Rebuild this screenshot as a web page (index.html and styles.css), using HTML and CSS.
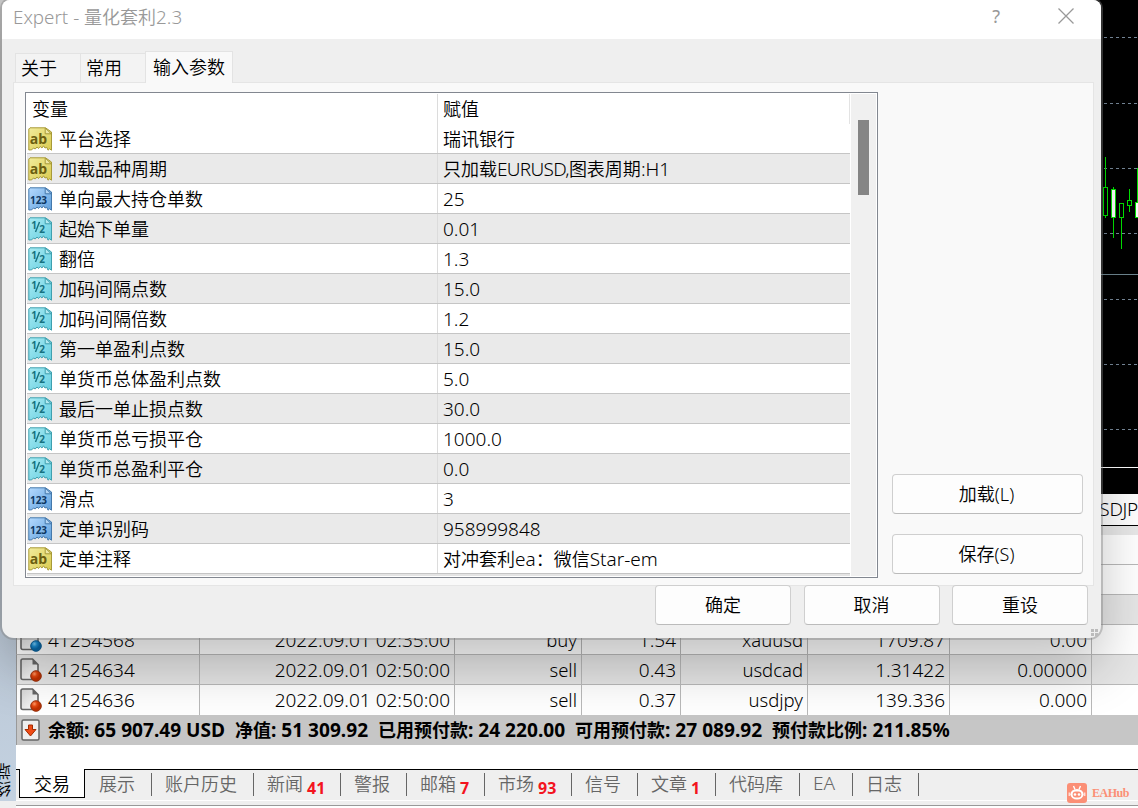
FILE: index.html
```
<!DOCTYPE html>
<html lang="zh-CN">
<head>
    <meta charset="UTF-8">
    <meta name="viewport" content="width=device-width, initial-scale=1.0">
    <title>Expert - 量化套利2.3</title>
    <link rel="stylesheet" href="styles.css">
</head>
<body>
    <!-- shared icon shapes -->
    <svg class="defs" width="0" height="0">
        <defs>
            <linearGradient id="gYellow" x2="1" y2="1"><stop offset="0" stop-color="#f3ec9c"/><stop offset="1" stop-color="#d9cb50"/></linearGradient>
            <linearGradient id="gBlue" x2="1" y2="1"><stop offset="0" stop-color="#b5daff"/><stop offset="1" stop-color="#5f9fdb"/></linearGradient>
            <linearGradient id="gCyan" x2="1" y2="1"><stop offset="0" stop-color="#a9ebf3"/><stop offset="1" stop-color="#66cee0"/></linearGradient>
            <linearGradient id="gDoc" x2="1" y2="1"><stop offset="0" stop-color="#d4d4d4"/><stop offset="1" stop-color="#fff"/></linearGradient>
            <radialGradient id="gRed" cx=".35" cy=".3"><stop offset="0" stop-color="#ff9a66"/><stop offset=".5" stop-color="#e2470f"/><stop offset="1" stop-color="#bd3000"/></radialGradient>
            <radialGradient id="gDot" cx=".35" cy=".3"><stop offset="0" stop-color="#7fd0fa"/><stop offset=".5" stop-color="#1c8fd6"/><stop offset="1" stop-color="#0968a8"/></radialGradient>
            <path id="paper" d="M2 .8H17.5L23.5 5V23.2L21.5 21.8 20 23.2 18.8 20.3 17 21 15.5 18.8 14 21 12.2 19.5 10.5 21.5 9 20 7.2 22 5.5 21 3.8 22.8 .8 23V2Z"/>
            <path id="fold" d="M17.2 1V6.8H23.2Z"/>
            <path id="doc" d="M2.8 1H12.5L18 6.5V19.5Q18 21.5 16 21.5H2.8Q1 21.5 1 19.5V2.8Q1 1 2.8 1Z"/>
        </defs>
    </svg>

    <div class="workspace">
        <div class="rail"><span>终端</span></div>
        <div class="main">
            <div class="chart">
                <svg width="37" height="494" shape-rendering="crispEdges">
                    <g stroke="#778899" stroke-dasharray="3 3">
                        <path d="M3 37.5H37M3 103.5H37M3 168.5H37M3 233.5H37M3 299.5H37M3 364.5H37M3 429.5H37"/>
                    </g>
                    <path d="M0 274.5H37" stroke="#6f8791"/>
                    <path d="M0 467.5H37" stroke="#fff"/>
                    <g stroke="#00e600" fill="#000">
                        <path d="M4.5 157V218M12.5 187V238M20.5 203V249M28.5 189V212M36.5 168V218"/>
                        <rect x="2.5" y="187.5" width="4" height="28"/>
                        <rect x="10.5" y="189.5" width="4" height="28" fill="#fff"/>
                        <rect x="18.5" y="203.5" width="4" height="14"/>
                        <rect x="26.5" y="200.5" width="4" height="5"/>
                        <rect x="34.5" y="202.5" width="4" height="15" fill="#fff"/>
                    </g>
                </svg>
            </div>
            <div class="chart-tab"><span>SDJP</span></div>
            <div class="terminal">
                <div class="order blank"></div>
                <div class="order blank"></div>
                <div class="order odd blank"></div>
                <div class="order">
                    <span class="id"><svg width="23" height="24"><use href="#doc" fill="url(#gDoc)" stroke="#666" stroke-width="1.6"/><path d="M12.5 1V6.5H18Z" fill="#666"/><circle cx="16" cy="18" r="5.3" fill="url(#gDot)" stroke="#0e5f96"/></svg>41254568</span>
                    <span>2022.09.01 02:35:00</span><span>buy</span><span>1.54</span><span>xauusd</span><span>1709.87</span><span>0.00</span>
                </div>
                <div class="order odd">
                    <span class="id"><svg width="23" height="24"><use href="#doc" fill="url(#gDoc)" stroke="#666" stroke-width="1.6"/><path d="M12.5 1V6.5H18Z" fill="#666"/><circle cx="16" cy="18" r="5.3" fill="url(#gRed)" stroke="#99340f"/></svg>41254634</span>
                    <span>2022.09.01 02:50:00</span><span>sell</span><span>0.43</span><span>usdcad</span><span>1.31422</span><span>0.00000</span>
                </div>
                <div class="order last">
                    <span class="id"><svg width="23" height="24"><use href="#doc" fill="url(#gDoc)" stroke="#666" stroke-width="1.6"/><path d="M12.5 1V6.5H18Z" fill="#666"/><circle cx="16" cy="18" r="5.3" fill="url(#gRed)" stroke="#99340f"/></svg>41254636</span>
                    <span>2022.09.01 02:50:00</span><span>sell</span><span>0.37</span><span>usdjpy</span><span>139.336</span><span>0.000</span>
                </div>
                <div class="summary">
                    <svg width="19" height="22"><rect x="1" y="1" width="17" height="20" rx="1.5" fill="#eee" stroke="#666" stroke-width="1.5"/><path d="M7.5 6H11.5V10.5H15L9.5 17 4 10.5H7.5Z" fill="#ef4b16" stroke="#a22b00"/></svg>
                    <span>余额<i>: 65 907.49 USD&nbsp; </i>净值<i>: 51 309.92&nbsp; </i>已用预付款<i>: 24 220.00&nbsp; </i>可用预付款<i>: 27 089.92&nbsp; </i>预付款比例<i>: 211.85%</i></span>
                </div>
                <div class="tabs">
                    <span class="tab active">交易</span>
                    <span class="tab">展示</span>
                    <span class="tab">账户历史</span>
                    <span class="tab">新闻<b>41</b></span>
                    <span class="tab">警报</span>
                    <span class="tab">邮箱<b>7</b></span>
                    <span class="tab">市场<b>93</b></span>
                    <span class="tab">信号</span>
                    <span class="tab">文章<b>1</b></span>
                    <span class="tab">代码库</span>
                    <span class="tab latin">EA</span>
                    <span class="tab">日志</span>
                </div>
                <div class="frame-edge"></div>
            </div>
        </div>
    </div>

    <div class="dialog">
        <div class="titlebar">
            <span class="title"><i>Expert - </i>量化套利<i>2.3</i></span>
            <span class="help">?</span>
            <svg width="16" height="16"><path d="M.5 .5L15.5 15.5M15.5 .5L.5 15.5" stroke="#999" stroke-width="1.3"/></svg>
        </div>
        <div class="dialog-tabs">
            <span>关于</span>
            <span>常用</span>
            <span class="current">输入参数</span>
        </div>
        <div class="page">
            <div class="list">
                <div class="rows" id="rows">
                    <div class="row head"><span>变量</span><span>赋值</span></div>
                </div>
                <div class="scroll"><div class="thumb"></div></div>
            </div>
            <div class="side">
                <button>加载<i>(L)</i></button>
                <button>保存<i>(S)</i></button>
            </div>
        </div>
        <div class="actions">
            <button>确定</button>
            <button>取消</button>
            <button>重设</button>
        </div>
        <svg class="grip" width="7" height="7"><path d="M0 0h3v3H0zM4 0h3v3H4zM0 4h3v3H0zM4 4h3v3H4z" fill="#bbb"/></svg>
    </div>

    <div class="watermark">
        <svg width="20" height="20"><rect width="20" height="20" rx="3" fill="#fb8f76"/><path d="M6.5 3L8 6.5M13.5 3L12 6.5" stroke="#fff" stroke-width="1.4"/><ellipse cx="10" cy="11.3" rx="6.6" ry="5.3" fill="#fff"/><rect x="5.6" y="8.6" width="8.8" height="5.8" rx="2.9" fill="#fb8f76"/><circle cx="8" cy="11.5" r="1.3" fill="#fff"/><circle cx="12" cy="11.5" r="1.3" fill="#fff"/><path d="M2.2 9.5V13M17.8 9.5V13" stroke="#fff"/></svg>
        <span>EAHub</span>
    </div>

    <script src="script.js"></script>
</body>
</html>
```
FILE: styles.css
```
* {
    box-sizing: border-box;
}
body {
    margin: 0;
    width: 1138px;
    height: 808px;
    overflow: hidden;
    position: relative;
    background: #efefef;
    color: #000;
    font: 350 18px/29px "Noto Sans CJK SC", sans-serif;
}
i {
    font-style: normal;
    font-family: "Noto Sans", sans-serif;
    font-weight: 350;
    font-size: 19px;
    line-height: 1;
}
.defs {
    position: absolute;
}
.workspace {
    display: flex;
    height: 808px;
}
.rail {
    width: 16px;
    height: 801px;
    flex: none;
    overflow: hidden;
    display: flex;
    flex-direction: column;
    justify-content: flex-end;
    background: linear-gradient(#c8c8c8 0 470px, #b9c5d3 560px, #c3d1e0);
}
.rail span {
    writing-mode: vertical-rl;
    transform: rotate(180deg);
    font-size: 17px;
    line-height: 17px;
    width: 17px;
    margin: 0 0 4px -6px;
}
.main {
    flex: 1;
    min-width: 0;
    display: flex;
    flex-direction: column;
}
.chart {
    height: 494px;
    display: flex;
    justify-content: flex-end;
    background: #000;
}
.chart svg {
    display: block;
}
.chart-tab {
    height: 32px;
    background: #fff;
    border-bottom: 1px solid #000;
    text-align: right;
    font-family: "Noto Sans", sans-serif;
    font-weight: 350;
    font-size: 19px;
    line-height: 31px;
}
.chart-tab span {
    letter-spacing: -.3px;
}
.terminal {
    height: 282px;
    border-top: 9px solid #e8e8e8;
    background: #fff;
    font-family: "Noto Sans", "Noto Sans CJK SC", sans-serif;
    flex: none;
}
.order {
    display: grid;
    grid-template-columns: 183px 255px 127px 99px 127px 142px 142px 1fr;
    height: 30px;
    font-size: 19px;
    font-weight: 350;
    border-left: 1px solid #999;
    border-bottom: 1px solid #b9b9b9;
}
.order.odd {
    background: #e6e6e6;
}
.order.last {
    border-bottom: none;
}
.order span {
    border-right: 1px solid #b9b9b9;
    padding-right: 4px;
    text-align: right;
    overflow: hidden;
    line-height: 30px;
}
.order span:nth-child(3),
.order span:nth-child(5) {
    font-size: 18.5px;
}
.order .id {
    display: flex;
    align-items: center;
    gap: 5px;
    padding-left: 3px;
}
.summary {
    height: 30px;
    background: #c6c6c6;
    border-left: 1px solid #999;
    display: flex;
    align-items: center;
    gap: 8px;
    padding-left: 4px;
    font-weight: bold;
    font-family: "Noto Sans CJK SC", sans-serif;
    font-size: 18px;
    line-height: 28px;
    white-space: nowrap;
}
.summary span {
    padding-bottom: 2px;
}
.summary i {
    font-weight: bold;
    font-size: 19.1px;
}
.tabs {
    margin-top: 24px;
    height: 31px;
    display: flex;
    padding-left: 3px;
    background: #efefef;
    border-top: 1px solid #000;
    font-family: "Noto Sans CJK SC", sans-serif;
}
.frame-edge {
    height: 6px;
    background: #efefef;
    border-top: 1px solid #fff;
    border-bottom: 1px solid #999;
}
.tab {
    position: relative;
    height: 28px;
    line-height: 26px;
    padding: 0 15px 0 14px;
    width: 66px;
    color: #666;
    white-space: nowrap;
}
.tab:nth-child(3) {
    width: 102px;
}
.tab:nth-child(4),
.tab:nth-child(7) {
    width: 87px;
}
.tab:nth-child(6),
.tab:nth-child(9) {
    width: 78px;
}
.tab:nth-child(10) {
    width: 84px;
}
.tab::after {
    content: "";
    position: absolute;
    right: -1px;
    top: 3px;
    width: 1px;
    height: 23px;
    background: #666;
}
.tab.active {
    background: #fff;
    color: #000;
    border: 1px solid #000;
    border-top: none;
    margin-top: -1px;
    height: 29px;
    line-height: 28px;
    padding: 0 14px;
}
.tab.active::after {
    display: none;
}
.tab.latin {
    width: 53px;
    font-family: "Noto Sans", sans-serif;
    font-size: 19px;
}
.tab b {
    font: bold 16px/16px "Noto Sans", sans-serif;
    color: #f3141e;
    margin-left: 4px;
    position: relative;
    top: 3px;
}

/* dialog window */
.dialog {
    position: absolute;
    left: 2px;
    top: 0;
    width: 1099px;
    height: 638px;
    background: #efefef;
    border-radius: 8px 8px 12px 12px;
    box-shadow: 0 0 0 2px rgba(128, 128, 128, .4), 0 28px 54px rgba(0, 0, 0, .24);
}
.titlebar {
    height: 39px;
    background: #fff;
    border-radius: 8px 8px 0 0;
    display: flex;
    align-items: center;
    padding: 0 27px 7px 11px;
    color: #999;
}
.title {
    flex: 1;
    white-space: pre;
}
.title i {
    font-size: 18.8px;
}
.help {
    font: 18px "Noto Sans", sans-serif;
    margin-right: 58px;
}
.dialog-tabs {
    display: flex;
    align-items: flex-end;
    height: 43px;
    padding-left: 13px;
}
.dialog-tabs span {
    width: 65px;
    height: 29px;
    line-height: 27px;
    padding-left: 5px;
    background: #f3f3f3;
    border: 1px solid #e3e3e3;
    border-bottom: none;
    border-right: none;
}
.dialog-tabs .current {
    width: 88px;
    height: 32px;
    line-height: 29px;
    padding-left: 7px;
    background: #f9f9f9;
    border-right: 1px solid #e3e3e3;
    margin-bottom: -1px;
    z-index: 1;
}
.page {
    margin-left: 11px;
    width: 1081px;
    height: 504px;
    background: #f9f9f9;
    border: 1px solid #e5e5e5;
    padding: 9px 10px 7px 11px;
    display: flex;
}
.list {
    width: 853px;
    height: 486px;
    border: 1px solid #828790;
    background: #fff;
    padding: 1px;
    display: flex;
    justify-content: space-between;
}
.rows {
    width: 823px;
    overflow: hidden;
    background: #e4e4e4;
}
.row {
    display: grid;
    grid-template-columns: 411px 1fr;
    height: 30px;
    background: #fff;
    border-bottom: 1px solid #c5c5c5;
}
.row.head {
    border-bottom: none;
    border-right: 1px solid #e3e3e3;
}
.row.head > span {
    padding-bottom: 2px;
}
.row.head span:first-child {
    padding-left: 5px;
}
.row.odd {
    background: #eaeaea;
}
.row > span {
    display: flex;
    align-items: center;
    line-height: 29px;
    white-space: pre;
}
.row > span:first-child {
    border-right: 1px solid #dcdcdc;
}
.row > span:last-child {
    padding-left: 5px;
}
.row i {
    padding-top: 2px;
}
/* capitals run wide, tighten them */
.row .caps {
    letter-spacing: -.7px;
}
.row svg {
    margin: 0 7px 0 1px;
    flex: none;
}
.row svg text {
    font-family: "Open Sans", sans-serif;
    font-weight: bold;
    text-anchor: middle;
}
.scroll {
    width: 25px;
    background: #f0f0f0;
    padding: 26px 0 0 7px;
}
.thumb {
    width: 11px;
    height: 75px;
    background: #858585;
}
.side {
    flex: 1;
    display: flex;
    flex-direction: column;
    justify-content: flex-end;
    align-items: flex-end;
    gap: 20px;
    padding-bottom: 4px;
}
button {
    width: 136px;
    height: 40px;
    border: 1px solid #cfcfcf;
    border-bottom-color: #bbb;
    border-radius: 4px;
    background: #fdfdfd;
    color: #000;
    font: 350 18px/36px "Noto Sans CJK SC", sans-serif;
    padding: 0 0 2px;
}
.side button {
    width: 191px;
    padding: 0 2px 2px 0;
}
button i {
    font-size: 18px;
}
.actions {
    display: flex;
    justify-content: flex-end;
    gap: 12.5px;
    margin-top: -1px;
    padding-right: 13px;
}
.grip {
    position: absolute;
    right: 3px;
    bottom: 2px;
}
.watermark {
    position: absolute;
    left: 1067px;
    top: 783px;
    display: flex;
    align-items: center;
    gap: 5px;
    color: #fb8f76;
    font: bold 12px/20px "Liberation Serif", serif;
    letter-spacing: -.5px;
}
```
FILE: script.js
```
const icons = {
    ab: ['url(#gYellow)', '#a89a38', '#6b5e10', 14, 'ab'],
    num: ['url(#gBlue)', '#4579ab', '#0d3763', 10, '123'],
    half: ['url(#gCyan)', '#3fa0af', '#16717f', 12, '½'],
};

const params = [
    ['ab', '平台选择', '瑞讯银行'],
    ['ab', '加载品种周期', '只加载EURUSD,图表周期:H1'],
    ['num', '单向最大持仓单数', '25'],
    ['half', '起始下单量', '0.01'],
    ['half', '翻倍', '1.3'],
    ['half', '加码间隔点数', '15.0'],
    ['half', '加码间隔倍数', '1.2'],
    ['half', '第一单盈利点数', '15.0'],
    ['half', '单货币总体盈利点数', '5.0'],
    ['half', '最后一单止损点数', '30.0'],
    ['half', '单货币总亏损平仓', '1000.0'],
    ['half', '单货币总盈利平仓', '0.0'],
    ['num', '滑点', '3'],
    ['num', '定单识别码', '958999848'],
    ['ab', '定单注释', '对冲套利ea：微信Star-em'],
];

function icon(type) {
    const [fill, edge, ink, size, label] = icons[type];
    const text = type === 'half'
        ? `<g fill="${ink}"><text x="6" y="12" font-size="10">1</text><text x="14" y="15.5" font-size="10">2</text></g><path d="M11.5 5L7.5 15" stroke="${ink}" stroke-width="1.4"/>`
        : `<text x="10.5" y="16.5" font-size="${size}" fill="${ink}">${label}</text>`;
    return `<svg width="24" height="24"><use href="#paper" fill="${fill}" stroke="${edge}"/><use href="#fold" fill="#fff" fill-opacity=".35" stroke="${edge}"/>${text}</svg>`;
}

// latin runs use their own font size
const mixed = s => s.replace(/[\x20-\x7e]+/g, m => `<i${/[A-Z]{3}/.test(m) ? ' class="caps"' : ''}>${m}</i>`);

document.getElementById('rows').insertAdjacentHTML('beforeend', params.map(([type, name, value], n) =>
    `<div class="row${n % 2 ? ' odd' : ''}"><span>${icon(type)}${name}</span><span>${mixed(value)}</span></div>`
).join(''));
```
